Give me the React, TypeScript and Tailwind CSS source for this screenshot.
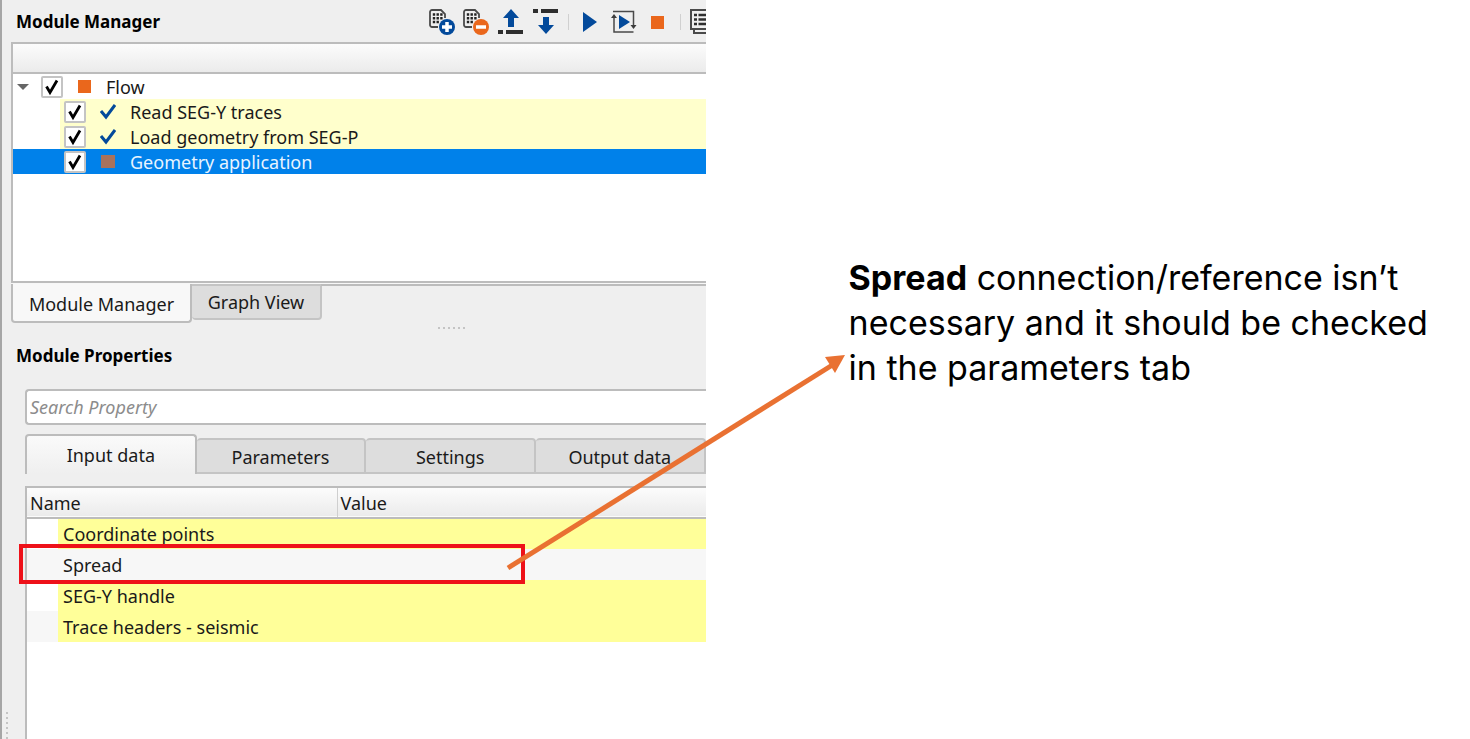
import { useState } from 'react';
import type { ReactNode } from 'react';

interface FlowItem {
  name: string;
  status: 'done' | 'stopped';
  selected?: boolean;
}

interface PropertyRow {
  name: string;
  linked: boolean;
  marked?: boolean;
}

const flowItems: FlowItem[] = [
  { name: 'Read SEG-Y traces', status: 'done' },
  { name: 'Load geometry from SEG-P', status: 'done' },
  { name: 'Geometry application', status: 'stopped', selected: true },
];

const propertyRows: PropertyRow[] = [
  { name: 'Coordinate points', linked: true },
  { name: 'Spread', linked: false, marked: true },
  { name: 'SEG-Y handle', linked: true },
  { name: 'Trace headers - seismic', linked: true },
];

const propertyTabs = ['Input data', 'Parameters', 'Settings', 'Output data'];

function ListIcon({ children }: { children: ReactNode }) {
  return (
    <svg width="26" height="26" viewBox="0 0 26 26" fill="none">
      <path d="M9 18H3a2 2 0 0 1-2-2V3a2 2 0 0 1 2-2H12l4 4V9" stroke="#4a4a4a" strokeWidth="1.800" />
      <path d="M3.800 5.500h2.400M7.500 5.500h2.400M11.200 5.500h2.400M3.800 9.200h2.400M7.500 9.200h2.400M11.200 9.200h2.400M3.800 13h2.400M7.500 13h2.400" stroke="#222" strokeWidth="2.400" />
      {children}
    </svg>
  );
}

function AddModuleIcon() {
  return (
    <ListIcon>
      <circle cx="18" cy="18" r="8" fill="#034a9b" />
      <path d="M18 13v10M13 18h10" stroke="#fff" strokeWidth="3.500" />
    </ListIcon>
  );
}

function RemoveModuleIcon() {
  return (
    <ListIcon>
      <circle cx="18" cy="18" r="8" fill="#ea671c" />
      <path d="M13 18h10" stroke="#fff" strokeWidth="3.500" />
    </ListIcon>
  );
}

function MoveUpIcon() {
  return (
    <svg width="26" height="26" viewBox="0 0 26 26">
      <path d="M13 0l8 9h-5v9h-6V9H5z" fill="#034a9b" />
      <path d="M0 21h5v4H0zM8 21h17v4H8z" fill="#2e2e2e" />
    </svg>
  );
}

function MoveDownIcon() {
  return (
    <svg width="26" height="26" viewBox="0 0 26 26">
      <path d="M0 0h5v4H0zM8 0h17v4H8z" fill="#2e2e2e" />
      <path d="M13 25l-8-9h5V8h6v8h5z" fill="#034a9b" />
    </svg>
  );
}

function PlayIcon() {
  return (
    <svg width="14" height="20" viewBox="0 0 14 20">
      <path d="M0 0l14 10L0 20z" fill="#034a9b" />
    </svg>
  );
}

function LoopIcon() {
  return (
    <svg width="26" height="24" viewBox="0 0 26 24" fill="none">
      <path d="M2 1.500H22.500V17M22.500 22H3V6" stroke="#4a4a4a" strokeWidth="1.500" />
      <path d="M0 8l3-4 3 4zM19.500 15h6l-3 4z" fill="#3c3c3c" />
      <path d="M8 5l11 7-11 7z" fill="#034a9b" />
    </svg>
  );
}

function LogIcon() {
  return (
    <svg width="26" height="26" viewBox="0 0 26 26" fill="none">
      <path d="M1 1h22v19H1zM4 20v4h22" stroke="#4a4a4a" strokeWidth="2" />
      <path d="M4 6h3M8.500 6h12M4 10.500h3M8.500 10.500h12M4 15h3M8.500 15h12" stroke="#2e2e2e" strokeWidth="2.500" />
    </svg>
  );
}

function StatusIcon({ item }: { item: FlowItem }) {
  if (item.status === 'stopped') {
    return <span className="mx-px size-3.5 border-b border-[#0081ea] bg-[#a9725c]" />;
  }
  return (
    <svg width="16" height="16" viewBox="0 0 16 16" fill="none">
      <path d="M1 7l5 6 9-12" stroke="#034a9b" strokeWidth="3" />
    </svg>
  );
}

function TreeCheckbox({ label }: { label: string }) {
  const [checked, setChecked] = useState(true);

  return (
    <span className="relative size-[22px] flex-none">
      <input
        type="checkbox"
        aria-label={label}
        checked={checked}
        onChange={(e) => setChecked(e.target.checked)}
        className="block size-full appearance-none rounded-[2px] border-2 border-[#c4c4c4] bg-white"
      />
      {checked && (
        <svg className="pointer-events-none absolute inset-0" width="22" height="22" viewBox="0 0 22 22" fill="none">
          <path d="M5.500 10.500l3.500 6 7-12" stroke="#000" strokeWidth="2.800" />
        </svg>
      )}
    </span>
  );
}

function Toolbar() {
  return (
    <div className="flex flex-none items-center">
      <button aria-label="Add module" className="mr-2"><AddModuleIcon /></button>
      <button aria-label="Remove module" className="mr-[9px]"><RemoveModuleIcon /></button>
      <button aria-label="Move up" className="mr-[9px]"><MoveUpIcon /></button>
      <button aria-label="Move down" className="mr-[9px]"><MoveDownIcon /></button>
      <span className="mr-3.5 h-4 w-px bg-[#d0d0d0]" />
      <button aria-label="Run" className="mr-3.5"><PlayIcon /></button>
      <button aria-label="Run in loop" className="mr-3.5"><LoopIcon /></button>
      <button aria-label="Stop" className="mr-4 size-[13px] bg-[#ea671c]" />
      <span className="mr-[9px] h-4 w-px bg-[#d0d0d0]" />
      <button aria-label="Log"><LogIcon /></button>
    </div>
  );
}

function ModuleTree() {
  return (
    <div className="ml-[9px] h-[241px] border-2 border-r-0 border-[#bcbcbc] bg-white">
      <div className="h-[30px] border-b-2 border-[#bcbcbc] bg-linear-to-b from-[#fcfcfc] to-[#ebebeb]" />
      <ul>
        <li className="flex h-[25px] items-center pl-1">
          <button aria-label="Collapse Flow" className="mr-3">
            <svg width="12" height="6" viewBox="0 0 12 6">
              <path d="M0 0h12L6 6z" fill="#666" />
            </svg>
          </button>
          <TreeCheckbox label="Flow" />
          <span className="mx-[15px] size-[13px] bg-[#ea671c]" />
          Flow
        </li>
        {flowItems.map((item) => (
          <li key={item.name} className={item.selected ? 'bg-[#0081ea] pl-[47px] text-[#e8f4ff]' : 'pl-[47px]'}>
            <div className={item.selected ? 'flex h-[25px] items-center pl-1' : 'flex h-[25px] items-center bg-[#ffffcc] pl-1'}>
              <TreeCheckbox label={item.name} />
              <span className="mx-3.5 flex"><StatusIcon item={item} /></span>
              {item.name}
            </div>
          </li>
        ))}
      </ul>
    </div>
  );
}

function PropertiesTable() {
  return (
    <div className="ml-[23px] mt-3 flex-1 border-t-2 border-l-2 border-[#bcbcbc] bg-white">
      <table className="w-full table-fixed border-collapse text-left">
        <colgroup>
          <col className="w-[31px]" />
          <col className="w-[279px]" />
          <col />
        </colgroup>
        <thead>
          <tr className="h-[30px] border-b-2 border-[#bcbcbc] bg-linear-to-b from-[#fcfcfc] to-[#ebebeb]">
            <th colSpan={2} className="border-r border-[#cfcfcf] p-0 pl-[3px] font-normal">Name</th>
            <th className="p-0 pl-[3px] font-normal">Value</th>
          </tr>
        </thead>
        <tbody>
          {propertyRows.map((row) => (
            <tr key={row.name} className="h-[31px] even:bg-[#f7f7f7]">
              <td className="relative p-0">
                {row.marked && (
                  <div className="pointer-events-none absolute -top-[5px] -left-2 z-10 h-10 w-[506px] border-4 border-[#ee1119]" />
                )}
              </td>
              <td className={row.linked ? 'bg-[#ffff99] p-0 pl-[5px]' : 'p-0 pl-[5px]'}>{row.name}</td>
              <td className={row.linked ? 'bg-[#ffff99] p-0' : 'p-0'} />
            </tr>
          ))}
        </tbody>
      </table>
    </div>
  );
}

function ModulePanel() {
  const [tab, setTab] = useState('Input data');

  return (
    <section className="relative flex w-[48%] flex-none flex-col overflow-hidden border-l-2 border-[#a6a6a6] bg-[#efefef] font-['Noto_Sans',sans-serif] text-[18px] leading-6 text-[#1a1a1a]">
      <header className="flex h-[42px] items-center pt-0.5 pl-3.5">
        <h1 className="w-[413px] flex-none text-[17px] font-bold text-black">Module Manager</h1>
        <Toolbar />
      </header>

      <ModuleTree />

      <div className="ml-[9px] flex h-[41px] items-start border-t border-[#f7f7f7]">
        <button className="h-[39px] w-[181px] rounded-b border-2 border-t-0 border-[#bcbcbc] bg-[#f8f8f8] pt-0.5">
          Module Manager
        </button>
        <button className="h-[36px] w-[130px] rounded-b border-2 border-l-0 border-[#c4c4c4] bg-[#dddddd]">
          Graph View
        </button>
        <span className="-ml-px h-0.5 flex-1 bg-[#bcbcbc]" />
      </div>

      <div className="ml-[436px] flex h-2 items-center gap-[3px]">
        {[0, 1, 2, 3, 4, 5].map((dot) => (
          <span key={dot} className="size-0.5 bg-[#c4c4c4]" />
        ))}
      </div>

      <h2 className="mt-3 mb-[21px] pl-3.5 text-[17px] font-bold text-black">Module Properties</h2>

      <input
        type="text"
        aria-label="Search Property"
        placeholder="Search Property"
        className="ml-[23px] h-9 rounded-l border-2 border-r-0 border-[#bcbcbc] bg-white pl-[3px] italic placeholder:text-[#8c8c8c]"
      />

      <div className="mt-[9px] ml-[23px] flex h-10 items-end">
        {propertyTabs.map((name) => (
          <button
            key={name}
            onClick={() => setTab(name)}
            className={
              name === tab
                ? 'h-10 flex-1 rounded-t border-2 border-b-0 border-[#bcbcbc] bg-linear-to-b from-[#fafafa] to-[#efefef]'
                : 'h-9 flex-1 rounded-t border-2 border-l-0 border-[#c4c4c4] bg-[#dddddd] pt-0.5'
            }
          >
            {name}
          </button>
        ))}
      </div>

      <PropertiesTable />

      {/* Dock handle */}
      <div className="absolute bottom-0 left-1 flex flex-col gap-[3px]">
        {[0, 1, 2, 3, 4, 5].map((dot) => (
          <span key={dot} className="size-0.5 bg-[#c4c4c4]" />
        ))}
      </div>
    </section>
  );
}

export default function App() {
  return (
    <main className="relative flex min-h-screen bg-white">
      <ModulePanel />

      <p className="flex-1 pt-[255px] pr-5 pl-[143px] font-['Inter',sans-serif] text-[34px] leading-[45px] text-black">
        <strong>Spread</strong> connection/reference isn’t
        <br />
        necessary and it should be checked
        <br />
        in the parameters tab
      </p>

      {/* Callout arrow from the Spread row to the note */}
      <svg className="pointer-events-none absolute top-[350px] left-[500px] z-20" width="350" height="225" viewBox="0 0 350 225">
        <path d="M8 218L334 14" stroke="#e97132" strokeWidth="5" />
        <path d="M345 5l-20 2 10 16z" fill="#e97132" />
      </svg>
    </main>
  );
}
